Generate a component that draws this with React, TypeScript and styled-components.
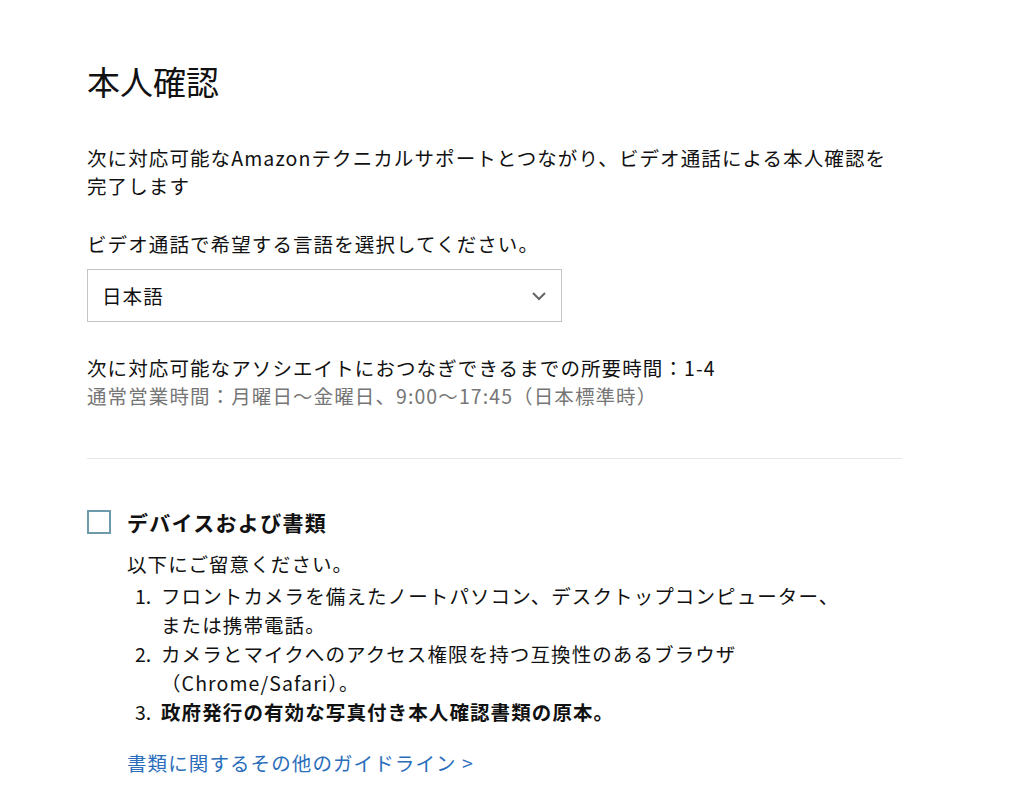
import styled, { createGlobalStyle } from "styled-components";

const GlobalStyle = createGlobalStyle`
  body {
    margin: 0;
    background: #fff;
    font-family: "Noto Sans CJK JP", "Noto Sans", sans-serif;
    color: #111;
  }
`;

const languages = ["日本語", "English"];

const App = () => {
  return (
    <Container>
      <GlobalStyle />
      <Title>本人確認</Title>
      <Intro>
        次に対応可能なAmazonテクニカルサポートとつながり、ビデオ通話による本人確認を
        <br />
        完了します
      </Intro>
      <FieldLabel>ビデオ通話で希望する言語を選択してください。</FieldLabel>
      <SelectBox>
        <SelectValue>{languages[0]}</SelectValue>
        <svg width="16" height="10" viewBox="0 0 16 10">
          <path d="M2 2 L8 8 L14 2" fill="none" stroke="#666" strokeWidth="2" />
        </svg>
      </SelectBox>
      <WaitInfo>
        <WaitText>次に対応可能なアソシエイトにおつなぎできるまでの所要時間：1-4</WaitText>
        <Hours>通常営業時間：月曜日～金曜日、9:00～17:45（日本標準時）</Hours>
      </WaitInfo>
      <Divider />
      <CheckRow>
        <CheckBox />
        <CheckLabel>デバイスおよび書類</CheckLabel>
      </CheckRow>
      <Details>
        <Note>以下にご留意ください。</Note>
        <List>
          <Item>
            <Num>1.</Num>
            <span>
              フロントカメラを備えたノートパソコン、デスクトップコンピューター、
              <br />
              または携帯電話。
            </span>
          </Item>
          <Item>
            <Num>2.</Num>
            <span>
              カメラとマイクへのアクセス権限を持つ互換性のあるブラウザ
              <br />
              （Chrome/Safari）。
            </span>
          </Item>
          <Item>
            <Num>3.</Num>
            <Strong>政府発行の有効な写真付き本人確認書類の原本。</Strong>
          </Item>
        </List>
        <GuideLink href="#">書類に関するその他のガイドライン &gt;</GuideLink>
      </Details>
    </Container>
  );
};

const Container = styled.div`
  width: 815px;
  padding: 58px 0 0 87px;
  font-size: 19.5px;
  letter-spacing: 1.1px;
  line-height: 28px;
`;

const Title = styled.h1`
  margin: 0;
  font-size: 33px;
  font-weight: 400;
  letter-spacing: 0;
  line-height: 46px;
  color: #111;
`;

const Intro = styled.p`
  margin: 40px 0 0;
  width: 900px;
`;

const FieldLabel = styled.div`
  margin-top: 30px;
`;

const SelectBox = styled.div`
  margin-top: 11px;
  width: 475px;
  height: 53px;
  box-sizing: border-box;
  border: 1px solid #c4c4c4;
  display: flex;
  align-items: center;
  justify-content: space-between;
  padding: 0 14px 0 14px;
`;

const SelectValue = styled.span``;

const WaitInfo = styled.div`
  margin-top: 32px;
`;

const WaitText = styled.div`
  color: #111;
`;

const Hours = styled.div`
  color: #767676;
`;

const Divider = styled.hr`
  margin: 48px 0 0;
  border: none;
  border-top: 1px solid #e6e6e6;
`;

const CheckRow = styled.div`
  margin-top: 49px;
  display: flex;
  align-items: center;
  gap: 16px;
`;

const CheckBox = styled.div`
  width: 24px;
  height: 24px;
  box-sizing: border-box;
  border: 2px solid #6f9aac;
  background: #fff;
`;

const CheckLabel = styled.span`
  font-weight: 700;
  font-size: 21px;
  letter-spacing: 1.3px;
`;

const Details = styled.div`
  padding-left: 40px;
  margin-top: 14px;
`;

const Note = styled.div``;

const List = styled.ol`
  list-style: none;
  margin: 3px 0 0;
  padding: 0 0 0 8px;
  width: 780px;
`;

const Item = styled.li`
  display: flex;
  line-height: 29px;
`;

const Num = styled.span`
  width: 26px;
  flex-shrink: 0;
  letter-spacing: 0;
`;

const Strong = styled.span`
  font-weight: 700;
`;

const GuideLink = styled.a`
  display: inline-block;
  margin-top: 23px;
  color: #2a6ebb;
  text-decoration: none;
`;

export default App;
